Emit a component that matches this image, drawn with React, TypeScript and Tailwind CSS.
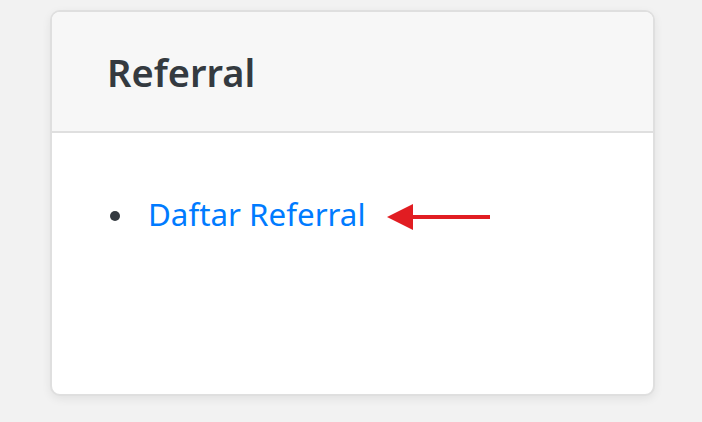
export default function App() {
  return (
    <div className="min-h-[422px] w-full bg-[#f2f2f2] pt-[10px] pl-[50px] font-['Noto_Sans','Open_Sans',sans-serif]">
      <div className="flex h-[386px] w-[605px] flex-col overflow-hidden rounded-[10px] border-2 border-[#dfdfdf] bg-white shadow-[0_3px_10px_rgba(0,0,0,0.07)]">
        <div className="flex h-[121px] shrink-0 items-center border-b-2 border-[#dfdfdf] bg-[#f7f7f7] pl-[55px]">
          <h2 className="text-[38px] font-semibold leading-none text-[#343a40]">Referral</h2>
        </div>
        <div className="pt-[66px] pl-[58px]">
          <ul className="flex items-center">
            <li className="flex items-center">
              <span className="mr-[28px] mt-[2px] h-[10px] w-[10px] rounded-full bg-[#343a40]" />
              <a href="#" className="text-[31.3px] leading-none text-[#007bff]">
                Daftar Referral
              </a>
              <svg width="104" height="26" viewBox="0 0 104 26" className="ml-[22px] mt-[4px]">
                <polygon points="0,13 26,0 26,26" fill="#e11d22" />
                <rect x="24" y="11" width="79" height="4" fill="#e11d22" />
              </svg>
            </li>
          </ul>
        </div>
      </div>
    </div>
  );
}
